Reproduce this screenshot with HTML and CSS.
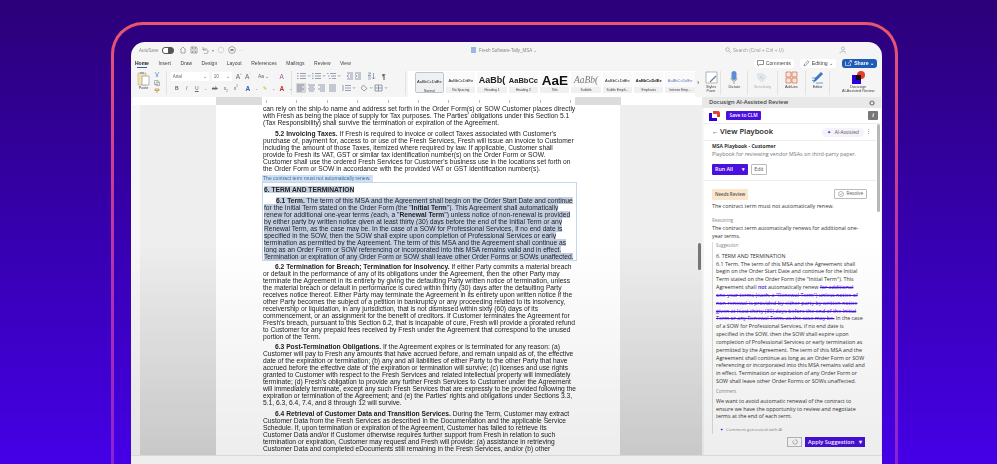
FILE: index.html
```html
<!DOCTYPE html>
<html lang="en">
<head>
    <meta charset="UTF-8">
    <title>Docusign AI-Assisted Review</title>
    <link rel="stylesheet" href="styles.css">
</head>
<body>
<div class="frame">
<div class="window">

    <!-- title bar -->
    <div class="titlebar">
        <div class="qat">
            <span class="autosave">AutoSave</span>
            <span class="toggle"></span>
            <svg width="8" height="8" viewBox="0 0 8 8"><path d="M1 4 4 1l3 3M2 3.500V7h4V3.500" fill="none" stroke="#888" stroke-width=".7"/></svg>
            <svg width="8" height="8" viewBox="0 0 8 8"><path d="M1 1h5l1 1v5H1zM2.500 1v2h3V1M2.500 7V5h3v2" fill="none" stroke="#888" stroke-width=".7"/></svg>
            <svg width="8" height="8" viewBox="0 0 8 8"><path d="M2 1v3h3M2 4c2-2 5-1 5 1.500S5 8 3 7.500" fill="none" stroke="#888" stroke-width=".7"/></svg>
            <span class="caret">&#9662;</span>
            <svg width="8" height="8" viewBox="0 0 8 8"><circle cx="4" cy="4" r="2.800" fill="none" stroke="#ccc" stroke-width=".7"/></svg>
            <svg width="8" height="8" viewBox="0 0 8 8"><circle cx="4" cy="4" r="3.400" fill="none" stroke="#888" stroke-width=".7"/><path d="M2.500 3h3v2h-3z" fill="#888"/></svg>
            <span class="caret">&middot;&middot;&middot;</span>
        </div>
        <div class="filename">
            <svg width="5" height="6" viewBox="0 0 5 6"><path d="M0 0h5v6H0z" fill="#9db8e0"/></svg>
            Fresh Software-Tally_MSA &#8964;
        </div>
        <div class="search">
            <svg width="6" height="6" viewBox="0 0 6 6"><circle cx="2.500" cy="2.500" r="1.800" fill="none" stroke="#999" stroke-width=".6"/><path d="M4 4l2 2" stroke="#999" stroke-width=".6"/></svg>
            Search (Cmd + Ctrl + U)
        </div>
        <svg class="person" width="8" height="8" viewBox="0 0 8 8"><circle cx="5" cy="2.500" r="1.500" fill="none" stroke="#999" stroke-width=".6"/><path d="M2 7.500c0-3 6-3 6 0" fill="none" stroke="#999" stroke-width=".6"/></svg>
    </div>

    <!-- tabs -->
    <div class="tabs">
        <span class="tab active">Home</span>
        <span class="tab">Insert</span>
        <span class="tab">Draw</span>
        <span class="tab">Design</span>
        <span class="tab">Layout</span>
        <span class="tab">References</span>
        <span class="tab">Mailings</span>
        <span class="tab">Review</span>
        <span class="tab">View</span>
        <div class="tab-actions">
            <span class="pill">
                <svg width="7" height="6" viewBox="0 0 7 6"><path d="M.5.500h6v4H2.500L1 5.700V4.500H.5z" fill="none" stroke="#444" stroke-width=".6"/></svg>
                Comments
            </span>
            <span class="pill">
                <svg width="7" height="7" viewBox="0 0 7 7"><path d="M1 6l.5-2L5 .7l1.200 1.200L2.800 5.400z" fill="none" stroke="#666" stroke-width=".6"/></svg>
                Editing &#8964;
            </span>
            <span class="share">
                <svg width="7" height="6" viewBox="0 0 7 6"><path d="M.5 1.500V5.500h5V3.500M3 3.500l3-2.500M4.500.5H6.500V2.500" fill="none" stroke="#fff" stroke-width=".6"/></svg>
                Share &#8964;
            </span>
        </div>
    </div>

    <!-- ribbon -->
    <div class="ribbon">
        <div class="rgroup paste">
            <div class="paste-col">
                <svg width="13" height="15" viewBox="0 0 13 15"><path d="M1 2h8v12H1z" fill="#f3e2b8" stroke="#b9a87c" stroke-width=".6"/><path d="M3 1h4v2H3z" fill="#aaa"/><path d="M5 5h7v9H5z" fill="#fff" stroke="#888" stroke-width=".6"/></svg>
                <span class="mini">Paste</span>
            </div>
            <div class="clip-col">
                <svg width="6" height="6" viewBox="0 0 6 6"><path d="M1 0l3 5M5 0L2 5" stroke="#4a78b8" stroke-width=".6" fill="none"/></svg>
                <svg width="6" height="6" viewBox="0 0 6 6"><path d="M.5.500h3.500v4H.5zM2 2h3.500v3.500H2z" fill="#fff" stroke="#777" stroke-width=".5"/></svg>
                <svg width="6" height="6" viewBox="0 0 6 6"><path d="M1 1h4v1.500H1zM3 2.500V5" stroke="#c08030" stroke-width=".7" fill="none"/></svg>
            </div>
        </div>
        <div class="rgroup font">
            <div class="rrow">
                <span class="field fname">Arial<i>&#8964;</i></span>
                <span class="field fsize">10<i>&#8964;</i></span>
                <span class="tool big">A<sup>^</sup></span>
                <span class="tool big">A<sup>&#711;</sup></span>
                <span class="tool aa">Aa &#8964;</span>
                <span class="tool pen">A</span>
            </div>
            <div class="rrow lower">
                <b class="tool">B</b>
                <i class="tool">I</i>
                <u class="tool">U</u>
                <span class="caret">&#8964;</span>
                <s class="tool wide">ab</s>
                <span class="tool">x<sub>2</sub></span>
                <span class="tool">x<sup>2</sup></span>
                <span class="tool big colour-blue">A</span>
                <span class="caret">&#8964;</span>
                <span class="tool high">&#9998;</span>
                <span class="caret">&#8964;</span>
                <span class="tool big colour-red">A</span>
                <span class="caret">&#8964;</span>
            </div>
        </div>
        <div class="rgroup para">
            <div class="rrow">
                <svg width="15" height="8" viewBox="0 0 15 8"><path d="M4 1.500h6M4 4h6M4 6.500h6M1 1.500h1.500M1 4h1.500M1 6.500h1.500" stroke="#6a7a90" stroke-width=".7"/><path d="M12 3l1.200 1.500L14.400 3" stroke="#777" stroke-width=".5" fill="none"/></svg>
                <svg width="15" height="8" viewBox="0 0 15 8"><path d="M4 1.500h6M4 4h6M4 6.500h6M1 1.500h1.500M1 4h1.500M1 6.500h1.500" stroke="#6a7a90" stroke-width=".7"/><path d="M12 3l1.200 1.500L14.400 3" stroke="#777" stroke-width=".5" fill="none"/></svg>
                <svg width="15" height="8" viewBox="0 0 15 8"><path d="M4 1.500h6M5 4h5M6 6.500h4M1 1.500h1.500M2 4h1.500M3 6.500h1.500" stroke="#6a7a90" stroke-width=".7"/><path d="M12 3l1.200 1.500L14.400 3" stroke="#777" stroke-width=".5" fill="none"/></svg>
                <span class="sp6"></span>
                <svg width="8" height="8" viewBox="0 0 8 8"><path d="M1 1h6M4 3h3M4 5h3M1 7h6M3 2.500L1 4l2 1.500" stroke="#6a7a90" stroke-width=".7" fill="none"/></svg>
                <svg width="8" height="8" viewBox="0 0 8 8"><path d="M1 1h6M4 3h3M4 5h3M1 7h6M1 2.500L3 4 1 5.500" stroke="#6a7a90" stroke-width=".7" fill="none"/></svg>
                <span class="sp6"></span>
                <svg width="9" height="8" viewBox="0 0 9 8"><path d="M6.500 1v6M5 5.500 6.500 7 8 5.500" stroke="#6a7a90" stroke-width=".7" fill="none"/><path d="M1 1h3L1 3.500h3M1 5h3M1 7h3" stroke="#6a7a90" stroke-width=".6" fill="none"/></svg>
                <span class="sp6"></span>
                <span class="tool pilcrow">&para;</span>
            </div>
            <div class="rrow lower">
                <span class="align on"><svg width="9" height="8" viewBox="0 0 9 8"><path d="M1 1h7M1 3h5M1 5h7M1 7h5" stroke="#6a7a90" stroke-width=".7"/></svg></span>
                <span class="align"><svg width="9" height="8" viewBox="0 0 9 8"><path d="M1 1h7M2 3h5M1 5h7M2 7h5" stroke="#6a7a90" stroke-width=".7"/></svg></span>
                <span class="align"><svg width="9" height="8" viewBox="0 0 9 8"><path d="M1 1h7M3 3h5M1 5h7M3 7h5" stroke="#6a7a90" stroke-width=".7"/></svg></span>
                <span class="align"><svg width="9" height="8" viewBox="0 0 9 8"><path d="M1 1h7M1 3h7M1 5h7M1 7h7" stroke="#6a7a90" stroke-width=".7"/></svg></span>
                <span class="sp4"></span>
                <svg width="15" height="8" viewBox="0 0 15 8"><path d="M4 1.500h6M4 4h6M4 6.500h6M2 1v6" stroke="#6a7a90" stroke-width=".7"/><path d="M12 3l1.200 1.500L14.400 3" stroke="#777" stroke-width=".5" fill="none"/></svg>
                <span class="sp4"></span>
                <svg width="15" height="8" viewBox="0 0 15 8"><path d="M4.500 1 8 4.500 5 7 2 4z" fill="none" stroke="#6a7a90" stroke-width=".7"/><path d="M11 3l1.200 1.500L13.400 3" stroke="#777" stroke-width=".5" fill="none"/></svg>
                <svg width="15" height="8" viewBox="0 0 15 8"><path d="M1 1h7v6H1zM4.500 1v6M1 4h7" fill="none" stroke="#6a7a90" stroke-width=".7"/><path d="M11 3l1.200 1.500L13.400 3" stroke="#777" stroke-width=".5" fill="none"/></svg>
            </div>
        </div>
        <div class="gallery">
            <div class="style selected"><span class="sample s-body">AaBbCcDdEe</span><span class="mini">Normal</span></div>
            <div class="style"><span class="sample s-body">AaBbCcDdEe</span><span class="mini">No Spacing</span></div>
            <div class="style"><span class="sample s-h1">AaBb(</span><span class="mini">Heading 1</span></div>
            <div class="style"><span class="sample s-h2">AaBbCc</span><span class="mini">Heading 2</span></div>
            <div class="style"><span class="sample s-title">AaE</span><span class="mini">Title</span></div>
            <div class="style"><span class="sample s-sub">AaBb(</span><span class="mini">Subtitle</span></div>
            <div class="style"><span class="sample s-body">AaBbCcDdEe</span><span class="mini">Subtle Emph...</span></div>
            <div class="style"><span class="sample s-body strong">AaBbCcDdEe</span><span class="mini">Emphasis</span></div>
            <div class="style"><span class="sample s-body blue">AaBbCcDdEe</span><span class="mini">Intense Emp...</span></div>
        </div>
        <span class="more">&rsaquo;</span>
        <div class="rbtn panebtn">
            <svg width="13" height="13" viewBox="0 0 13 13"><path d="M1 1h11v11H1z" fill="#fff" stroke="#999" stroke-width=".7"/><path d="M5 11l6-6" stroke="#6a8ab0" stroke-width="1.500"/></svg>
            <span class="mini">Styles<br>Pane</span>
        </div>
        <div class="rbtn dictate">
            <svg width="8" height="13" viewBox="0 0 8 13"><rect x="1.500" y="0" width="5" height="9" rx="2.500" fill="#5b8fd0"/><path d="M1 7c0 4 6 4 6 0M4 10v3" stroke="#888" stroke-width=".7" fill="none"/></svg>
            <span class="mini">Dictate</span>
        </div>
        <div class="rbtn sens">
            <svg width="14" height="13" viewBox="0 0 14 13"><path d="M1 2h6l4 4-5 6-5-5z" fill="#dfe5ea"/><path d="M4 5l3 3" stroke="#bbb" stroke-width=".8"/></svg>
            <span class="mini faded">Sensitivity</span>
        </div>
        <div class="rbtn addins">
            <svg width="13" height="13" viewBox="0 0 13 13"><path d="M1 1h5v5H1zM7 1h5v5H7zM1 7h5v5H1zM7 7h5v5H7z" fill="#f8e6de" stroke="#d8795c" stroke-width=".8"/></svg>
            <span class="mini">Add-ins</span>
        </div>
        <div class="rbtn editor">
            <svg width="13" height="13" viewBox="0 0 13 13"><path d="M2 12l2-5 6-6 2 2-6 6z" fill="#3d74c4"/><path d="M1 7h5M1 9.500h4M5 12h7" stroke="#3d74c4" stroke-width=".7"/></svg>
            <span class="mini">Editor</span>
        </div>
        <div class="rbtn dsbtn">
            <svg width="13" height="13" viewBox="0 0 13 13"><circle cx="9" cy="4" r="4" fill="#e5402f"/><path d="M0 4h9v9H0z" fill="#2b00d8"/><path d="M4 4h5v5H4z" fill="#111"/></svg>
            <span class="mini">Docusign<br>AI-Assisted Review</span>
        </div>
    </div>

    <div class="main">
        <div class="leftcol">
            <!-- ruler -->
            <div class="ruler">
                <div class="ruler-white r-left"></div>
                <div class="ruler-grey r-m1"></div>
                <div class="ruler-white r-mid"><span class="tick"></span><span class="tick"></span><span class="tick"></span><span class="tick"></span><span class="tick"></span><span class="tick"></span><span class="tick"></span><span class="tick"></span><span class="tick"></span><span class="tick"></span><span class="tick"></span></div>
                <div class="ruler-grey r-m2"></div>
                <div class="ruler-white r-right"></div>
            </div>

            <!-- document -->
            <div class="docarea">
                <div class="vruler"></div>
                <div class="gutter g-left"></div>
                <div class="page">
                    <p class="flush">can rely on the ship-to name and address set forth in the Order Form(s) or SOW Customer places directly<br>with Fresh as being the place of supply for Tax purposes. The Parties' obligations under this Section 5.1<br>(Tax Responsibility) shall survive the termination or expiration of the Agreement.</p>
                    <p><b>5.2 Invoicing Taxes.</b> If Fresh is required to invoice or collect Taxes associated with Customer's<br>purchase of, payment for, access to or use of the Fresh Services, Fresh will issue an invoice to Customer<br>including the amount of those Taxes, itemized where required by law. If applicable, Customer shall<br>provide to Fresh its VAT, GST or similar tax identification number(s) on the Order Form or SOW.<br>Customer shall use the ordered Fresh Services for Customer's business use in the locations set forth on<br>the Order Form or SOW in accordance with the provided VAT or GST identification number(s).</p>
                    <div class="comment-tag">The contract term must not automatically renew.</div>
                    <div class="flagged">
                        <p class="flush"><b class="sel">6. TERM AND TERMINATION</b></p>
                        <p class="first"><span class="sel"><b>6.1 Term.</b> The term of this MSA and the Agreement shall begin on the Order Start Date and continue<br>for the Initial Term stated on the Order Form (the "<b>Initial Term</b>"). This Agreement shall automatically<br>renew for additional one-year terms (each, a "<b>Renewal Term</b>") unless notice of non-renewal is provided<br>by either party by written notice given at least thirty (30) days before the end of the Initial Term or any<br>Renewal Term, as the case may be. In the case of a SOW for Professional Services, if no end date is<br>specified in the SOW, then the SOW shall expire upon completion of Professional Services or early<br>termination as permitted by the Agreement. The term of this MSA and the Agreement shall continue as<br>long as an Order Form or SOW referencing or incorporated into this MSA remains valid and in effect.<br>Termination or expiration of any Order Form or SOW shall leave other Order Forms or SOWs unaffected.</span></p>
                    </div>
                    <p><b>6.2 Termination for Breach; Termination for Insolvency.</b> If either Party commits a material breach<br>or default in the performance of any of its obligations under the Agreement, then the other Party may<br>terminate the Agreement in its entirety by giving the defaulting Party written notice of termination, unless<br>the material breach or default in performance is cured within thirty (30) days after the defaulting Party<br>receives notice thereof. Either Party may terminate the Agreement in its entirety upon written notice if the<br>other Party becomes the subject of a petition in bankruptcy or any proceeding related to its insolvency,<br>receivership or liquidation, in any jurisdiction, that is not dismissed within sixty (60) days of its<br>commencement, or an assignment for the benefit of creditors. If Customer terminates the Agreement for<br>Fresh's breach, pursuant to this Section 6.2, that is incapable of cure, Fresh will provide a prorated refund<br>to Customer for any prepaid fees received by Fresh under the Agreement that correspond to the unused<br>portion of the Term.</p>
                    <p><b>6.3 Post-Termination Obligations.</b> If the Agreement expires or is terminated for any reason: (a)<br>Customer will pay to Fresh any amounts that have accrued before, and remain unpaid as of, the effective<br>date of the expiration or termination; (b) any and all liabilities of either Party to the other Party that have<br>accrued before the effective date of the expiration or termination will survive; (c) licenses and use rights<br>granted to Customer with respect to the Fresh Services and related intellectual property will immediately<br>terminate; (d) Fresh's obligation to provide any further Fresh Services to Customer under the Agreement<br>will immediately terminate, except any such Fresh Services that are expressly to be provided following the<br>expiration or termination of the Agreement; and (e) the Parties' rights and obligations under Sections 3.3,<br>5.1, 6.3, 6.4, 7.4, and 8 through 12 will survive.</p>
                    <p><b>6.4 Retrieval of Customer Data and Transition Services.</b> During the Term, Customer may extract<br>Customer Data from the Fresh Services as described in the Documentation and the applicable Service<br>Schedule. If, upon termination or expiration of the Agreement, Customer has failed to retrieve its<br>Customer Data and/or if Customer otherwise requires further support from Fresh in relation to such<br>termination or expiration, Customer may request and Fresh will provide: (a) assistance in retrieving<br>Customer Data and completed eDocuments still remaining in the Fresh Services, and/or (b) other</p>
                </div>
                <div class="gutter g-right"><span class="docscroll"></span></div>
            </div>
        </div>

        <!-- add-in panel -->
        <aside class="panel">
            <div class="panel-head">
                <span>Docusign AI-Assisted Review</span>
                <svg width="6" height="6" viewBox="0 0 6 6"><circle cx="3" cy="3" r="2" fill="none" stroke="#777" stroke-width="1.200"/></svg>
            </div>
            <div class="panel-body">
                <div class="panel-scroll"></div>
                <div class="brandbar">
                    <svg width="11" height="11" viewBox="0 0 11 11"><path d="M4 1h5a2 2 0 0 1 2 2v4H8V4H4z" fill="#e5402f"/><path d="M0 3h3v5h5v3H0z" fill="#2b00d8"/></svg>
                    <span class="btn-clm">Save to CLM</span>
                    <span class="info">i</span>
                </div>
                <div class="titlerow">
                    <span class="back">&larr;</span>
                    <span class="viewtitle">View Playbook</span>
                    <span class="ai-pill"><em>&#10022;</em> AI-Assisted</span>
                    <span class="kebab">&#8942;</span>
                </div>
                <div class="intro">
                    <b>MSA Playbook - Customer</b>
                    <span class="muted">Playbook for reviewing vendor MSAs on third-party paper.</span>
                    <div class="runrow">
                        <span class="btn-run">Run All <i>&#9662;</i></span>
                        <span class="btn-edit">Edit</span>
                    </div>
                </div>
                <div class="finding">
                    <div class="findhead">
                        <span class="badge">Needs Review</span>
                        <span class="btn-resolve">
                            <svg width="6" height="6" viewBox="0 0 6 6"><circle cx="3" cy="3" r="2.500" fill="none" stroke="#777" stroke-width=".5"/><path d="M1.800 3l1 1L4.400 2.200" fill="none" stroke="#777" stroke-width=".5"/></svg>
                            Resolve
                        </span>
                    </div>
                    <div class="rule">The contract term must not automatically renew.</div>
                    <div class="label">Reasoning</div>
                    <div>The contract term automatically renews for additional one-<br>year terms.</div>
                    <div class="suggest">
                        <div class="label">Suggestion</div>
                        <div class="suggest-text">6. TERM AND TERMINATION<br>6.1 Term. The term of this MSA and the Agreement shall<br>begin on the Order Start Date and continue for the Initial<br>Term stated on the Order Form (the "Initial Term"). This<br>Agreement shall <ins>not</ins> automatically renew <del>for additional<br>one-year terms (each, a "Renewal Term") unless notice of<br>non-renewal is provided by either party by written notice<br>given at least thirty (30) days before the end of the Initial<br>Term or any Renewal Term, as the case may be.</del> In the case<br>of a SOW for Professional Services, if no end date is<br>specified in the SOW, then the SOW shall expire upon<br>completion of Professional Services or early termination as<br>permitted by the Agreement. The term of this MSA and the<br>Agreement shall continue as long as an Order Form or SOW<br>referencing or incorporated into this MSA remains valid and<br>in effect. Termination or expiration of any Order Form or<br>SOW shall leave other Order Forms or SOWs unaffected.</div>
                        <div class="label comment-label">Comment</div>
                        <div class="comment-text">We want to avoid automatic renewal of the contract to<br>ensure we have the opportunity to review and negotiate<br>terms at the end of each term.</div>
                        <div class="ai-note"><em>&#10022;</em> Comment generated with AI</div>
                    </div>
                    <div class="actions">
                        <span class="btn-reset">
                            <svg width="6" height="6" viewBox="0 0 6 6"><path d="M1.500 1.500A2.200 2.200 0 1 0 3 .8" fill="none" stroke="#777" stroke-width=".6"/></svg>
                        </span>
                        <span class="btn-apply">Apply Suggestion <i>&#9662;</i></span>
                    </div>
                </div>
            </div>
        </aside>
        <div class="fade"></div>
    </div>

    <div class="statusbar"></div>
</div>
</div>
</body>
</html>
```

FILE: styles.css
```css
html, body {
    margin: 0;
    height: 464px;
    overflow: hidden;
}

body {
    background: linear-gradient(180deg, #2b0078 0%, #3500a8 45%, #4500e6 100%);
    font-family: "Liberation Sans", Arial, sans-serif;
    color: #333;
}

/* pink outline around the app window */
.frame {
    box-sizing: border-box;
    width: 787px;
    height: 442px;
    margin: 22px 0 0 111px;
    padding: 17px 13px 0 17px;
    border: 3px solid transparent;
    border-bottom: 0;
    border-radius: 32px 32px 0 0;
    background:
        linear-gradient(180deg, #2b0078 0%, #3500a8 45%, #4500e6 100%) padding-box fixed,
        linear-gradient(180deg, #e8566e 0%, #c43a9a 40%, #8a20d8 100%) border-box;
}

.window {
    position: relative;
    height: 422px;
    overflow: hidden;
    border-radius: 14px 14px 0 0;
    background: #f5f5f5;
    filter: blur(0.45px);
}

.titlebar {
    display: flex;
    align-items: center;
    height: 14px;
    padding: 1px 8px 0 8px;
    color: #888;
    font-size: 4.500px;
}

.qat {
    display: flex;
    align-items: center;
    gap: 3px;
    width: 300px;
}

.autosave {
    width: 20px;
}

.toggle {
    width: 10px;
    height: 5px;
    margin-right: 2px;
    border-radius: 3px;
    background: linear-gradient(90deg, #fff 50%, #555 50%);
    border: 1px solid #555;
}

.caret {
    color: #888;
    font-size: 4px;
}

.filename {
    display: flex;
    align-items: center;
    gap: 3px;
    width: 285px;
    padding-left: 32px;
    box-sizing: border-box;
}

.search {
    display: flex;
    align-items: center;
    gap: 2px;
    width: 110px;
    color: #999;
    padding-left: 1px;
    letter-spacing: .1px;
}

.person {
    margin-left: 3px;
}

.tabs {
    display: flex;
    align-items: center;
    gap: 9.500px;
    height: 12px;
    padding-left: 4px;
    font-size: 5px;
    color: #444;
}

.tab.active {
    color: #222;
    font-weight: bold;
    box-shadow: 0 3px 0 -2px #2a62b0;
    padding-bottom: 1px;
}

.tab-actions {
    display: flex;
    align-items: center;
    gap: 6px;
    margin-left: auto;
    margin-right: 5px;
    font-size: 5.200px;
}

.pill {
    display: flex;
    align-items: center;
    gap: 2px;
    height: 9px;
    padding: 0 3px;
    border-radius: 3px;
    background: #fff;
}

.share {
    display: flex;
    align-items: center;
    gap: 2px;
    height: 9px;
    padding: 0 3px;
    border-radius: 3px;
    background: #1f5cb8;
    color: #fff;
    font-weight: bold;
}

.ribbon {
    display: flex;
    height: 28px;
    padding-top: 2px;
    box-sizing: border-box;
}

.rgroup {
    box-sizing: border-box;
    border-right: 1px solid #e2e2e2;
    height: 24px;
}

.paste {
    display: flex;
    width: 36px;
    padding-left: 6px;
    gap: 4px;
}

.paste-col {
    display: flex;
    flex-direction: column;
    align-items: center;
}

.clip-col {
    display: flex;
    flex-direction: column;
    gap: 2px;
    padding-top: 1px;
}

.mini {
    font-size: 3.800px;
    line-height: 4.300px;
    color: #444;
    text-align: center;
    white-space: nowrap;
}

.font {
    width: 125px;
    padding-left: 4px;
}

.rrow {
    display: flex;
    align-items: center;
    height: 10px;
    gap: 3px;
    font-size: 5px;
    color: #666;
}

.rrow.lower {
    margin-top: 2px;
    gap: 4px;
    padding-left: 3px;
}

.field {
    display: flex;
    justify-content: space-between;
    align-items: center;
    height: 9px;
    padding: 0 2px;
    box-sizing: border-box;
    background: #fff;
    font-size: 4.500px;
    border-radius: 1px;
}

.field i {
    font-style: normal;
}

.fname {
    width: 38px;
}

.fsize {
    width: 20px;
    margin-right: 1px;
}

.tool {
    display: inline-block;
    min-width: 6px;
    text-align: center;
}

.tool sup, .tool sub {
    font-size: 3px;
    line-height: 0;
}

.big {
    font-size: 6.500px;
}

.aa {
    width: 14px;
    margin-left: 3px;
}

.pen {
    margin-left: 5px;
    color: #a05a9a;
    font-size: 6.500px;
}

.wide {
    min-width: 8px;
}

.colour-blue {
    color: #2a62c0;
    font-weight: bold;
    margin-left: 2px;
}

.colour-red {
    color: #c0302a;
    font-weight: bold;
}

.high {
    color: #c9a800;
}

.para {
    width: 115px;
    padding-left: 4px;
}

.sp6 {
    width: 5px;
}

.sp4 {
    width: 3px;
}

.pilcrow {
    font-size: 6.500px;
    font-weight: bold;
    color: #555;
}

.para .rrow {
    gap: 0;
}

.para .rrow.lower {
    padding-left: 0;
}

.align {
    display: flex;
    align-items: center;
    justify-content: center;
    width: 10.500px;
    height: 10px;
    border-radius: 1px;
}

.align.on {
    background: #d6d6d6;
}

.gallery {
    display: flex;
    align-items: flex-start;
    width: 287px;
    height: 26px;
    padding: 1px 0 0 0;
    box-sizing: border-box;
    margin-left: 2px;
    background: #fff;
    gap: 1px;
}

.style {
    box-sizing: border-box;
    display: flex;
    flex-direction: column;
    align-items: center;
    justify-content: space-between;
    width: 31px;
    height: 21px;
    overflow: hidden;
    padding: 2px 0 0;
    margin-left: 1px;
    background: #fafafa;
}

.style .mini {
    width: 100%;
    background: #f0f0f0;
    padding: 1px 0;
    font-size: 3.300px;
}

.style.selected {
    border: 1px solid #bcc6d0;
    border-radius: 2px;
    background: #eef1f4;
    margin-left: 7px;
}

.sample {
    display: block;
    height: 13px;
    line-height: 13px;
    white-space: nowrap;
    color: #222;
}

.s-body {
    font-size: 4px;
}

.strong {
    font-weight: bold;
}

.blue {
    color: #5a80b8;
}

.s-h1 {
    font-size: 9px;
    font-weight: bold;
}

.s-h2 {
    font-size: 7.500px;
    font-weight: bold;
}

.s-title {
    font-size: 13.500px;
    font-weight: bold;
    color: #111;
}

.s-sub {
    font-family: "Liberation Serif", serif;
    font-style: italic;
    font-size: 9.500px;
    color: #777;
}

.more {
    width: 7px;
    font-size: 7px;
    line-height: 24px;
    color: #555;
    text-align: center;
}

.rbtn {
    display: flex;
    flex-direction: column;
    align-items: center;
    gap: 1px;
    height: 24px;
    box-sizing: border-box;
    border-right: 1px solid #e2e2e2;
}

.panebtn {
    width: 20px;
}

.dictate {
    width: 27px;
}

.sens {
    width: 30px;
}

.addins {
    width: 28px;
}

.editor {
    width: 25px;
}

.dsbtn {
    width: 52px;
    border: 0;
    padding-left: 4px;
}

.faded {
    color: #aaa;
}

.main {
    position: relative;
    display: flex;
    height: 358px;
}

.leftcol {
    width: 571px;
    height: 100%;
}

/* rulers */
.ruler {
    display: flex;
    height: 8px;
    padding-left: 2px;
}

.ruler-white {
    background: #fff;
}

.ruler-grey {
    background: #dcdcdc;
}

.r-left {
    width: 83px;
}

.r-m1 {
    width: 46px;
}

.r-mid {
    display: flex;
    justify-content: space-between;
    align-items: center;
    width: 313px;
    padding: 0 4px;
    box-sizing: border-box;
}

.tick {
    width: 1px;
    height: 3px;
    background: #bbb;
}

.r-m2 {
    width: 46px;
}

.r-right {
    width: 81px;
}

.docarea {
    display: flex;
    height: 350px;
    background: #fff;
}

.vruler {
    width: 9px;
    background: #f6f6f6;
}

.gutter {
    background: linear-gradient(180deg, #eeeeee 40%, #d8d8d8 100%);
}

.g-left {
    width: 76px;
}

.g-right {
    position: relative;
    width: 82px;
}

.docscroll {
    position: absolute;
    right: 1px;
    top: 138px;
    width: 3px;
    height: 27px;
    border-radius: 2px;
    background: #777;
}

.page {
    box-sizing: border-box;
    width: 404px;
    height: 100%;
    overflow: hidden;
    padding: 0 0 0 47px;
    background: #fff;
    font-size: 6.700px;
    line-height: 7px;
    color: #222;
    white-space: nowrap;
}

.page p {
    margin: 3.500px 0 0;
    text-indent: 12px;
}

.page p.flush {
    margin-top: 0;
    text-indent: 0;
}

.comment-tag {
    width: 110px;
    height: 7px;
    margin: 3.500px 0 0 -1px;
    padding-left: 1px;
    background: #cfe1f3;
    color: #3f6aa0;
    font-size: 5.050px;
    line-height: 7px;
}

.flagged {
    width: 315px;
    margin: 0 0 -1.500px -1px;
    padding: 2.500px 0 0 1px;
    border: 1px solid #c7d8ec;
    box-sizing: border-box;
}

.flagged p.first {
    margin-top: 4px;
}

.sel {
    background: #c4d0e2;
}

/* panel on the right */
.panel {
    box-sizing: border-box;
    width: 179px;
    height: 100%;
    font-family: "Open Sans", "Noto Sans", sans-serif;
    font-size: 5.350px;
    line-height: 7.830px;
    color: #333;
}

.panel-head {
    display: flex;
    align-items: center;
    justify-content: space-between;
    height: 11px;
    padding: 0 6px 0 7px;
    background: #e8e8e8;
    color: #444;
    font-size: 5.800px;
    font-weight: 600;
}

.panel-body {
    position: relative;
    height: 347px;
    background: #fff;
    margin-left: 2px;
    white-space: nowrap;
}

.panel-scroll {
    position: absolute;
    right: 1.500px;
    top: 16px;
    width: 3px;
    height: 88px;
    background: #b8b8b8;
    border-radius: 2px;
}

.brandbar {
    display: flex;
    align-items: center;
    gap: 6px;
    height: 15px;
    padding: 0 3px 0 5px;
    border-bottom: 1px solid #eee;
}

.btn-clm {
    height: 9px;
    line-height: 9px;
    padding: 0 3.500px;
    border-radius: 1px;
    background: #4a10e0;
    color: #fff;
    font-size: 4.800px;
    font-weight: 600;
}

.info {
    width: 10px;
    height: 9px;
    margin-left: auto;
    background: #777;
    border-radius: 1px;
    color: #fff;
    font: italic bold 6px/9px "Liberation Serif", serif;
    text-align: center;
}

.titlerow {
    display: flex;
    align-items: center;
    height: 17px;
    padding: 0 10px 0 8px;
    border-bottom: 1px solid #eee;
    box-sizing: border-box;
}

.back {
    font-size: 7px;
    margin-right: 1px;
}

.viewtitle {
    color: #222;
    font-size: 7.600px;
    font-weight: 600;
}

.ai-pill {
    margin-left: auto;
    padding: 0 5px;
    height: 9px;
    line-height: 9px;
    border-radius: 5px;
    background: #f5f2fc;
    color: #555;
    font-size: 4.800px;
}

.ai-pill em, .ai-note em {
    color: #5a20c8;
    font-style: normal;
    margin-right: 2px;
}

.kebab {
    margin-left: 2px;
    color: #666;
}

.intro {
    padding: 2px 8px 5px;
    border-bottom: 1px solid #eee;
}

.intro b {
    display: block;
    color: #333;
    font-size: 5px;
}

.muted {
    display: block;
    color: #777;
}

.runrow {
    display: flex;
    gap: 3px;
    margin-top: 5px;
}

.btn-run {
    display: flex;
    justify-content: space-between;
    width: 36px;
    height: 11px;
    line-height: 11px;
    padding: 0 3px;
    box-sizing: border-box;
    background: #4a10e0;
    border-radius: 1px;
    color: #fff;
    font-weight: 600;
}

.btn-run i, .btn-apply i {
    font-style: normal;
}

.btn-edit {
    width: 16px;
    height: 11px;
    line-height: 9px;
    box-sizing: border-box;
    border: 1px solid #bbb;
    text-align: center;
    border-radius: 1px;
    color: #555;
}

.finding {
    padding: 8px 7px 0 8px;
}

.findhead {
    display: flex;
    justify-content: space-between;
    align-items: center;
    padding-right: 7px;
}

.badge {
    padding: 0 3px;
    height: 11px;
    line-height: 11px;
    background: #fae6cc;
    color: #555;
    font-size: 4.500px;
    font-weight: 600;
}

.btn-resolve {
    display: flex;
    align-items: center;
    gap: 3px;
    height: 10px;
    padding: 0 3px;
    box-sizing: border-box;
    border: 1px solid #bbb;
    border-radius: 1px;
    color: #555;
    font-size: 4.600px;
}

.rule {
    margin-top: 3px;
}

.label {
    margin-top: 7px;
    color: #888;
    font-size: 4.400px;
}

.suggest {
    margin-top: 1px;
    padding: 0 0 0 3px;
    border-left: 1px solid #ddd;
}

.suggest .label {
    margin-top: 0;
}

.suggest-text {
    margin-top: 3px;
}

ins {
    color: #4a10e0;
    text-decoration: none;
    font-weight: 600;
}

del {
    color: #4a10e0;
}

.suggest .comment-label {
    margin-top: 2px;
}

.comment-text {
    margin-top: 2px;
}

.ai-note {
    margin-top: 5px;
    padding-left: 4px;
    color: #888;
    font-size: 4.300px;
}

.actions {
    display: flex;
    justify-content: flex-end;
    gap: 3px;
    margin-top: 3px;
    padding-right: 9px;
}

.btn-reset {
    display: flex;
    align-items: center;
    justify-content: center;
    width: 15px;
    height: 10px;
    box-sizing: border-box;
    border: 1px solid #bbb;
}

.btn-apply {
    display: flex;
    justify-content: space-between;
    width: 60px;
    height: 10px;
    line-height: 10px;
    padding: 0 3px;
    box-sizing: border-box;
    background: #4a10e0;
    color: #fff;
    font-size: 5.600px;
    font-weight: 600;
}

/* soft fade over the bottom of the window */
.fade {
    position: absolute;
    left: 0;
    right: 0;
    top: 0;
    bottom: 0;
    background: linear-gradient(180deg, rgba(0,0,0,0) 0%, rgba(0,0,0,0) 40%, rgba(0,0,0,0.07) 100%);
    pointer-events: none;
}

.statusbar {
    height: 10px;
    border-top: 1px solid #d8d8d8;
    background: #eeeeee;
}
```
